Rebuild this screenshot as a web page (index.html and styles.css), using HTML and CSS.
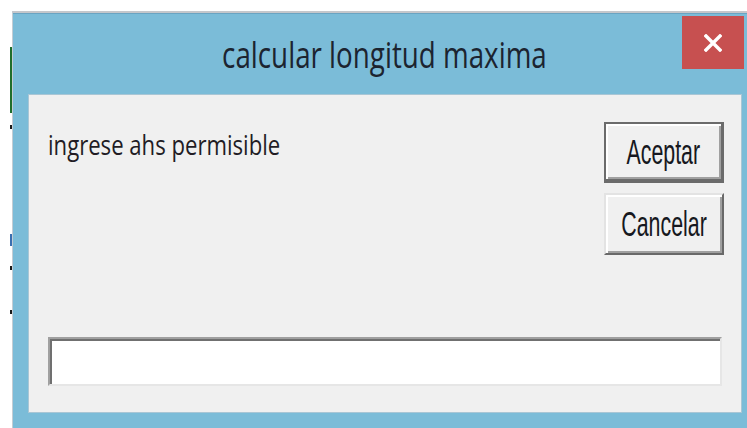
FILE: index.html
```html
<!DOCTYPE html>
<html lang="es">
<head>
<meta charset="utf-8">
<title>calcular longitud maxima</title>
<link rel="stylesheet" href="styles.css">
</head>
<body>
  <div class="desk">
    <span class="desk-cell"></span>
    <span class="desk-dot dot-a"></span>
    <span class="desk-dot dot-b"></span>
    <span class="desk-dot dot-c"></span>
    <span class="desk-dot dot-d"></span>
  </div>
  <div class="window">
    <div class="titlebar">
      <div class="title"><span class="title-text">calcular longitud maxima</span></div>
      <button class="close" type="button" aria-label="Cerrar">
        <svg width="18" height="18" viewBox="0 0 18 18" aria-hidden="true">
          <path d="M2 2 L16 16 M16 2 L2 16" stroke="#ffffff" stroke-width="3.4" stroke-linecap="square" fill="none"/>
        </svg>
      </button>
    </div>
    <div class="content">
      <div class="top-row">
        <p class="prompt"><span class="prompt-text">ingrese ahs permisible</span></p>
        <div class="actions">
          <button class="btn btn-default" type="button"><span class="btn-text">Aceptar</span></button>
          <button class="btn" type="button"><span class="btn-text">Cancelar</span></button>
        </div>
      </div>
      <input class="field" type="text" aria-label="ahs permisible">
    </div>
  </div>
</body>
</html>
```
FILE: styles.css
```css
html, body {
  margin: 0;
  padding: 0;
}

body {
  width: 747px;
  height: 428px;
  overflow: hidden;
  background: #ffffff;
  display: flex;
  font-family: "Open Sans", "Noto Sans", sans-serif;
}

/* sheet strip visible to the left of the dialog */
.desk {
  width: 12px;
  flex: none;
  display: flex;
  flex-direction: column;
  align-items: flex-end;
}

.desk-cell {
  width: 2px;
  height: 66px;
  margin-top: 47px;
  background: #1f6e2c;
}

.desk-dot {
  width: 2px;
  height: 4px;
  background: #1a1a1a;
}

.dot-a { margin-top: 12px; }
.dot-b { margin-top: 105px; background: #3b6fb0; height: 12px; }
.dot-c { margin-top: 20px; }
.dot-d { margin-top: 40px; }

/* dialog frame */
.window {
  flex: 1;
  margin-top: 11px;
  border-top: 2px solid #c5c7cb;
  border-left: 1px solid #c3cdd4;
  background: #7bbcd8;
  display: flex;
  flex-direction: column;
  min-width: 0;
}

.titlebar {
  height: 81px;
  flex: none;
  display: grid;
  grid-template-columns: 65px 1fr 65px;
  box-shadow: inset 0 1px 0 #6aa4c2;
}

.title {
  grid-column: 2;
  display: flex;
  align-items: center;
  justify-content: center;
  padding-left: 9px;
}

.title-text {
  display: inline-block;
  font-size: 37px;
  color: #1c2430;
  white-space: nowrap;
  transform: scaleX(0.75);
  transform-origin: center;
}

.close {
  grid-column: 3;
  align-self: start;
  margin-top: 3px;
  width: 62px;
  height: 53px;
  padding: 0;
  border: 0;
  background: #c75050;
  display: flex;
  align-items: center;
  justify-content: center;
}

/* client area */
.content {
  flex: 1;
  margin: 0 5px 15px 15px;
  border: 1px solid #a9c6d5;
  background: #f0f0f0;
  padding: 27px 17px 26px 19px;
  display: flex;
  flex-direction: column;
}

.top-row {
  display: flex;
  align-items: flex-start;
}

.prompt {
  flex: 1;
  margin: 0;
  padding-top: 3px;
  font-size: 28px;
  line-height: 1.362;
  color: #221c24;
}

.prompt-text {
  display: inline-block;
  white-space: nowrap;
  transform: scaleX(0.79);
  transform-origin: left center;
}

.actions {
  display: flex;
  flex-direction: column;
  gap: 10px;
  width: 120px;
}

.btn {
  width: 120px;
  height: 62px;
  padding: 0;
  margin: 0;
  background: #f0f0f0;
  font-family: "Liberation Sans", Arial, sans-serif;
  font-size: 35px;
  color: #161820;
  display: flex;
  align-items: center;
  justify-content: center;
  border: 2px solid;
  border-color: #e3e3e3 #696969 #696969 #e3e3e3;
  box-shadow: inset 2px 2px 0 #ffffff, inset -2px -2px 0 #a0a0a0;
}

.btn-default {
  height: 61px;
  border: 2px solid #6b6b6b;
  border-right-width: 3px;
  border-bottom-width: 4px;
  box-shadow: inset 2px 2px 0 #ffffff, inset -2px -2px 0 #a0a0a0;
}

.btn-text {
  display: inline-block;
  white-space: nowrap;
  transform: scaleX(0.61);
  transform-origin: center;
}

.field {
  margin-top: auto;
  margin-right: 2px;
  height: 49px;
  box-sizing: border-box;
  padding: 0 6px;
  background: #ffffff;
  border: 2px solid;
  border-color: #a0a0a0 #e6e6e6 #e6e6e6 #a0a0a0;
  box-shadow: inset 2px 2px 0 #707070;
  font-family: "Liberation Sans", Arial, sans-serif;
  font-size: 28px;
  outline: none;
}
```
